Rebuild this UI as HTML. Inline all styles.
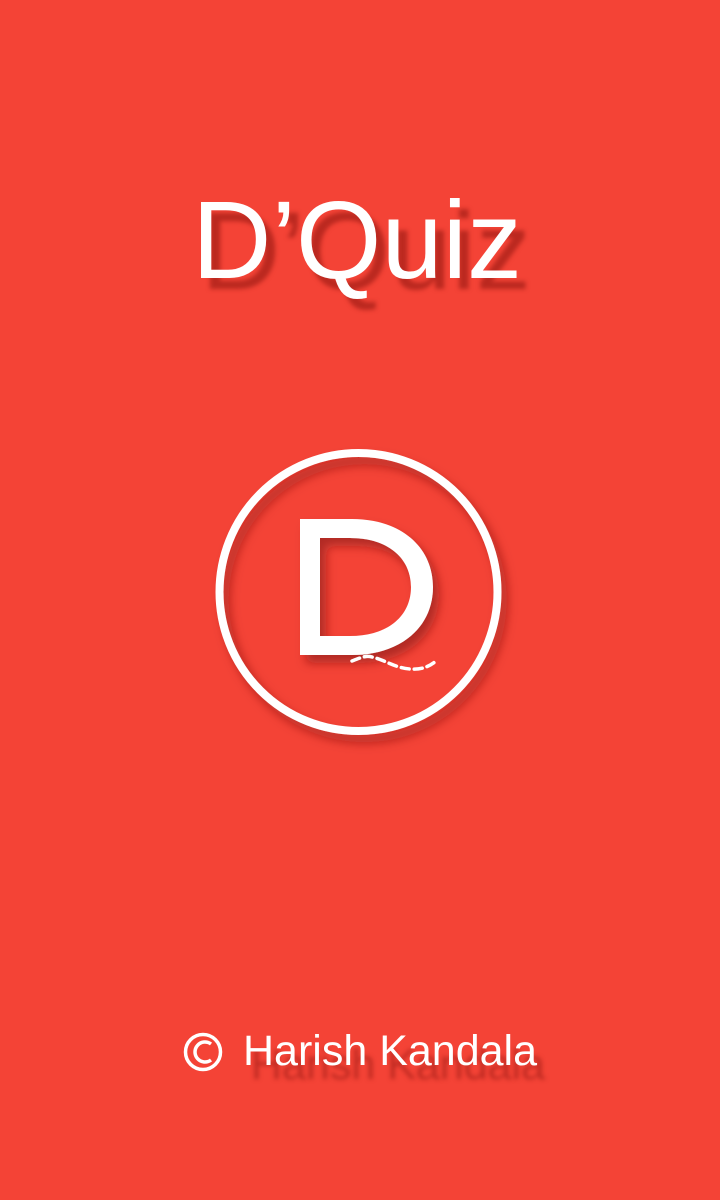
<!DOCTYPE html>
<html><head><style>
html,body{margin:0;padding:0}
body{width:720px;height:1200px;background:#f44336;position:relative;overflow:hidden;font-family:"Liberation Sans",sans-serif;color:#fff}
.t{position:absolute;white-space:nowrap;line-height:1}
</style></head><body>
<div class="t" style="left:192px;top:186px;font-size:110px;text-shadow:9px 11px 4px rgba(140,20,15,.55)">D’Quiz</div>
<svg width="720" height="1200" style="position:absolute;left:0;top:0">
<defs>
<filter id="s" x="-20%" y="-20%" width="150%" height="150%"><feDropShadow dx="6" dy="8" stdDeviation="5" flood-color="#7a1410" flood-opacity=".55"/></filter>
</defs>
<circle cx="358.5" cy="592" r="139" fill="none" stroke="#fff" stroke-width="8" filter="url(#s)"/>
<path d="M300 519 H352 C401 519 433 547 433 587 C433 627 401 655 352 655 H300 Z M320 538 V636 H350 C388 636 411 616 411 587 C411 558 388 538 350 538 Z" fill="#fff" fill-rule="evenodd" filter="url(#s)"/>
<path d="M352 661 C360 658 366 655 372 657 C385 660 395 668 410 669 C422 670 430 666 436 661" fill="none" stroke="#fff" stroke-width="3.5" stroke-dasharray="8 5" stroke-linecap="round"/>
<circle cx="203" cy="1052" r="17.5" fill="none" stroke="#fff" stroke-width="3.5"/>
<path d="M211 1044 A10 10 0 1 0 211 1060" fill="none" stroke="#fff" stroke-width="3.5"/>
</svg>
<div class="t" style="left:243px;top:1030px;font-size:43px;text-shadow:8px 14px 4px rgba(140,20,15,.5)">Harish Kandala</div>
</body></html>
